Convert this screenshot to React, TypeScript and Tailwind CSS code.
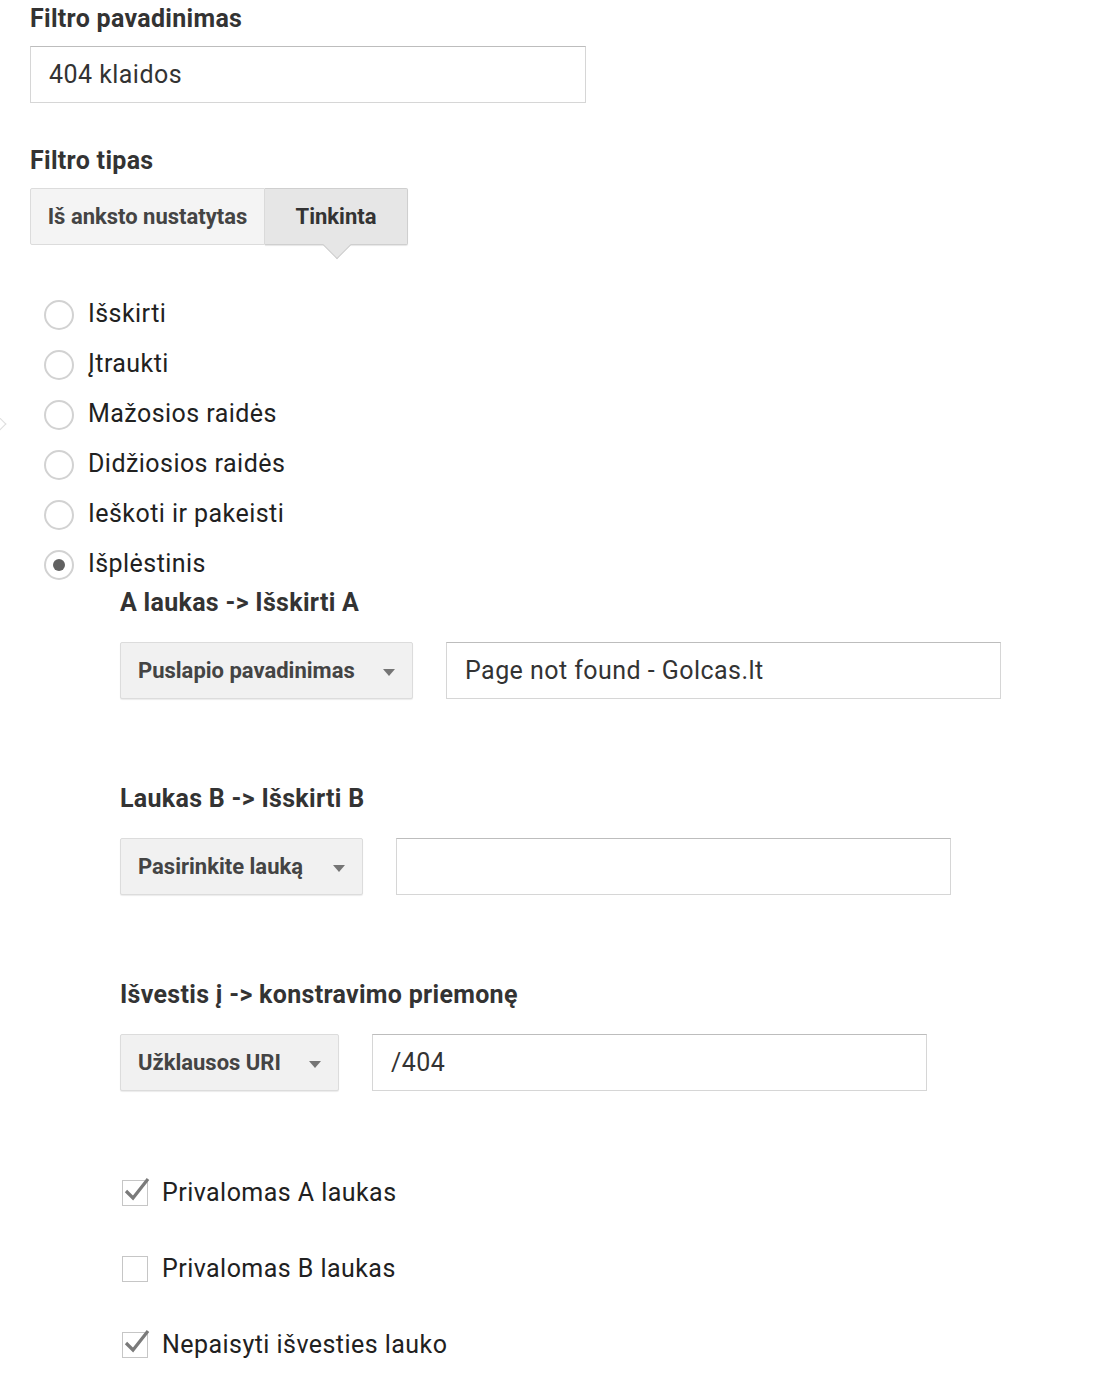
import React from "react";

const font = { fontFamily: "Roboto, 'Noto Sans', Arial, sans-serif" };

function Heading({ children }: { children: React.ReactNode }) {
  return (
    <h2 className="text-[25px] leading-[28px] font-bold tracking-[0.3px] text-[#333]">
      {children}
    </h2>
  );
}

function TextInput({ value, width }: { value: string; width: string }) {
  return (
    <div
      className={`${width} h-[57px] border border-[#d6d6d6] border-t-[#bdbdbd] bg-white flex items-center px-[18px] text-[25px] tracking-[0.45px] text-[#333]`}
    >
      {value}
    </div>
  );
}

function Dropdown({ label, width }: { label: string; width: string }) {
  return (
    <div
      className={`${width} h-[57px] rounded-[2px] border border-[#dcdcdc] bg-[#f1f1f1] shadow-[0_1px_1px_rgba(0,0,0,0.08)] flex items-center justify-between pl-[17px] pr-[16px]`}
    >
      <span className="text-[22px] font-bold text-[#444]">{label}</span>
      <svg width="14" height="8" viewBox="0 0 14 8" className="mt-[4px]">
        <path d="M1 0 L13 0 L7 7 Z" fill="#757575" />
      </svg>
    </div>
  );
}

function Radio({ label, checked }: { label: string; checked?: boolean }) {
  return (
    <div className="h-[50px] flex items-center gap-[14px]">
      <span className="w-[30px] h-[30px] rounded-full border-2 border-[#d2d2d2] bg-white flex items-center justify-center">
        {checked && <span className="w-[12px] h-[12px] rounded-full bg-[#616161]" />}
      </span>
      <span className="text-[25px] tracking-[0.45px] text-[#212121] -mt-[3px]">{label}</span>
    </div>
  );
}

function Checkbox({ label, checked }: { label: string; checked?: boolean }) {
  return (
    <div className="h-[40px] flex items-center gap-[14px]">
      <span className="relative w-[26px] h-[26px] border border-[#c6c6c6] bg-white">
        {checked && (
          <svg
            width="30"
            height="30"
            viewBox="0 0 30 30"
            className="absolute left-[-1px] top-[-6px]"
          >
            <path
              d="M4 16 L11 23 L26 4"
              fill="none"
              stroke="#7a7a7a"
              strokeWidth="3.2"
              strokeLinejoin="miter"
            />
          </svg>
        )}
      </span>
      <span className="text-[25px] tracking-[0.45px] text-[#212121]">{label}</span>
    </div>
  );
}

function FieldRow({
  heading,
  select,
  selectWidth,
  value,
}: {
  heading: string;
  select: string;
  selectWidth: string;
  value: string;
}) {
  return (
    <div className="flex flex-col">
      <Heading>{heading}</Heading>
      <div className="flex gap-[33px] mt-[25px]">
        <Dropdown label={select} width={selectWidth} />
        <TextInput value={value} width="w-[555px]" />
      </div>
    </div>
  );
}

export default function App() {
  return (
    <div style={font} className="relative w-[1096px] min-h-[1374px] bg-white pl-[30px] pt-[5px]">
      {/* stray arrow at left edge */}
      <span className="absolute left-[-8px] top-[418px] w-[12px] h-[12px] rotate-45 border-t border-r border-[#dedede]" />

      <Heading>Filtro pavadinimas</Heading>
      <div className="mt-[13px]">
        <TextInput value="404 klaidos" width="w-[556px]" />
      </div>

      <div className="mt-[44px]">
        <Heading>Filtro tipas</Heading>
      </div>

      {/* type toggle */}
      <div className="mt-[13px] flex">
        <div className="w-[235px] h-[57px] border border-[#dcdcdc] bg-[#f4f4f4] rounded-l-[2px] flex items-center justify-center text-[22px] font-bold text-[#444]">
          Iš anksto nustatytas
        </div>
        <div className="relative w-[143px] h-[57px] border border-[#cfcfcf] border-l-0 bg-[#e6e6e6] rounded-r-[2px] shadow-[0_1px_1px_rgba(0,0,0,0.1)] flex items-center justify-center text-[22px] font-bold text-[#333]">
          Tinkinta
          <span className="absolute left-[62px] bottom-[-11px] w-[20px] h-[20px] rotate-45 bg-[#e6e6e6] border-r border-b border-[#cfcfcf]" />
        </div>
      </div>

      {/* radios */}
      <div className="mt-[45px] pl-[14px] flex flex-col">
        <Radio label="Išskirti" />
        <Radio label="Įtraukti" />
        <Radio label="Mažosios raidės" />
        <Radio label="Didžiosios raidės" />
        <Radio label="Ieškoti ir pakeisti" />
        <Radio label="Išplėstinis" checked />
      </div>

      <div className="pl-[90px] flex flex-col">
        <div className="-mt-[1px]">
          <FieldRow
            heading="A laukas -> Išskirti A"
            select="Puslapio pavadinimas"
            selectWidth="w-[293px]"
            value="Page not found - Golcas.lt"
          />
        </div>
        <div className="mt-[86px]">
          <FieldRow
            heading="Laukas B -> Išskirti B"
            select="Pasirinkite lauką"
            selectWidth="w-[243px]"
            value=""
          />
        </div>
        <div className="mt-[86px]">
          <FieldRow
            heading="Išvestis į -> konstravimo priemonę"
            select="Užklausos URI"
            selectWidth="w-[219px]"
            value="/404"
          />
        </div>

        <div className="mt-[82px] pl-[2px] flex flex-col gap-[36px]">
          <Checkbox label="Privalomas A laukas" checked />
          <Checkbox label="Privalomas B laukas" />
          <Checkbox label="Nepaisyti išvesties lauko" checked />
        </div>
      </div>
    </div>
  );
}
